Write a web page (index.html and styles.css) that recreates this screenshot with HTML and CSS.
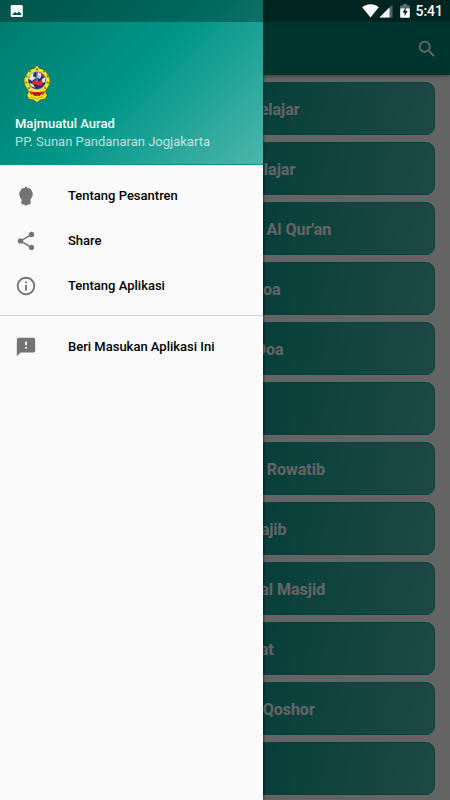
FILE: index.html
```html
<!DOCTYPE html>
<html lang="id">

<head>
    <meta charset="UTF-8">
    <meta name="viewport" content="width=device-width, initial-scale=1.0">
    <title>Majmuatul Aurad</title>
    <link rel="stylesheet" href="styles.css">
</head>

<body>
    <!-- status bar -->
    <div class="status">
        <svg class="status-photo" width="14" height="14" viewBox="0 0 14 14">
            <path fill="#fff" fill-rule="evenodd" d="M2 1h9.500a1.300 1.300 0 0 1 1.300 1.300v9.400a1.300 1.300 0 0 1-1.300 1.300H2a1.300 1.300 0 0 1-1.300-1.300V2.300A1.300 1.300 0 0 1 2 1zM2.500 11h8.500v-1.500L8.800 7.400 7.200 9.200 5 8 2.500 10.200z" />
        </svg>
        <svg width="17" height="14" viewBox="0 0 17 14">
            <path fill="#fff" d="M8.500 13.500L.2 3.200C2.500 1.300 5.300.3 8.500.3s6 1 8.300 2.900z" />
        </svg>
        <svg class="status-signal" width="14" height="14" viewBox="0 0 14 14">
            <path fill="#fff" fill-opacity=".3" d="M13.500.5v13H.5z" />
            <path fill="#fff" d="M10.500 3.500v10H.5z" />
        </svg>
        <svg class="status-battery" width="10" height="14" viewBox="0 0 10 14">
            <path fill="#fff" fill-opacity=".35" d="M3 0h4v1.400h2.300q.5 0 .5.600V5H.2V2q0-.6.5-.6H3z" />
            <path fill="#fff" d="M.2 4.500h9.600v8.500q0 .8-.8.800H1q-.8 0-.8-.8z" />
            <path fill="#00211d" d="M5.800 3.300L2.500 8.500h2.100v3.800l3-5.400H5.600z" />
        </svg>
        <span class="clock">5:41</span>
    </div>

    <!-- halaman utama -->
    <header class="appbar">
        <button class="search" type="button" aria-label="Cari">
            <svg width="22" height="22" viewBox="0 0 24 24">
                <path fill="#fff" d="M15.500 14h-.79l-.28-.27A6.470 6.470 0 0 0 16 9.500 6.500 6.500 0 1 0 9.500 16c1.610 0 3.090-.59 4.230-1.570l.27.28v.79l5 4.990L20.490 19l-4.990-5zm-6 0C7.010 14 5 11.990 5 9.500S7.010 5 9.500 5 14 7.010 14 9.500 11.990 14 9.500 14z" />
            </svg>
        </button>
    </header>

    <main class="list">
        <button class="item" type="button">Doa Sebelum Belajar</button>
        <button class="item" type="button">Doa Setelah Belajar</button>
        <button class="item" type="button">Doa Akan Membaca Al Qur'an</button>
        <button class="item" type="button">Pengertian Doa</button>
        <button class="item" type="button">Pembukaan Doa</button>
        <button class="item" type="button">Tahlil</button>
        <button class="item" type="button">Niat Sholat Sunnah Rowatib</button>
        <button class="item" type="button">Niat Sholat Wajib</button>
        <button class="item" type="button">Niat Sholat Tahiyatal Masjid</button>
        <button class="item" type="button">Sholat Jum'at</button>
        <button class="item" type="button">Niat Sholat Jama Qoshor</button>
        <button class="item" type="button">Wirid</button>
    </main>

    <div class="scrim"></div>

    <!-- menu samping -->
    <aside class="drawer">
        <div class="drawer-header">
            <svg class="logo" width="44" height="40" viewBox="0 0 44 40">
                <path fill="#f6e52b" stroke="#4b5a22" stroke-width=".8" d="M22 1l2.600 3.400c2 .3 4 .9 5.400 2.200 1.600 1.400 2 3 3.200 4.600 1.400 2 2 4.300 1.800 6.600-.2 3-1.700 5-3.400 7.400-.8 1.200-1.100 2.400-.8 3.600l1.400 2.300-1.500 3.300c-1.500 1.500-3.200.8-4.900 1.400L22 38.500l-3.800-2.700c-1.700-.6-3.400.1-4.900-1.400l-1.500-3.300 1.400-2.300c.3-1.200 0-2.400-.8-3.600-1.700-2.400-3.200-4.400-3.400-7.400-.2-2.300.4-4.600 1.800-6.600 1.200-1.600 1.600-3.200 3.200-4.600 1.400-1.300 3.400-1.900 5.400-2.200z" />
                <circle cx="22" cy="16.500" r="9" fill="#292d73" stroke="#c9bf55" stroke-width=".6" />
                <path fill="#dce5e9" d="M15 11l4-3-1 4 3 2-4 3-3-2zM23 8l4 2-2 5-3-2zM14 19l4 1 2 4-4-2zM27 15l3-2v5l-3 1z" />
                <path fill="#df2931" d="M17 18l4-2 2 2 3-2 2 3-2 3-4-1-2-1-2 1zM26 9l3 3-1 1-2-2z" />
                <path fill="none" stroke="#8fa3bd" stroke-width="1" d="M22 8v10M19 15l6-3" />
                <path fill="#d02c2c" d="M14 27l5 1h6l5-1-2 4-2-1-1 2h-6l-1-2-2 1z" />
                <path fill="#7c2020" d="M18 29h8v1.500h-8z" />
                <g fill="#3d8b4e">
                    <path d="M22 3.200l1.500 3h-3z" />
                    <circle cx="15" cy="7.500" r="1.100" />
                    <circle cx="29" cy="7.500" r="1.100" />
                    <circle cx="11.500" cy="12.500" r="1.100" />
                    <circle cx="32.500" cy="12.500" r="1.100" />
                    <circle cx="11.200" cy="18.500" r="1.100" />
                    <circle cx="32.800" cy="18.500" r="1.100" />
                    <circle cx="14" cy="24" r="1" />
                    <circle cx="30" cy="24" r="1" />
                </g>
                <path fill="none" stroke="#b39c20" stroke-width=".8" d="M15 33q4 0 7 2 3-2 7-2" />
            </svg>
            <div class="name">Majmuatul Aurad</div>
            <div class="sub">PP. Sunan Pandanaran Jogjakarta</div>
        </div>

        <nav class="menu">
            <a class="menu-item" href="#pesantren">
                <svg width="22" height="22" viewBox="0 0 22 22">
                    <path d="M11 1l1.200 1.700c2 .2 3.500 1 4.200 2.700 1.200 1.400 1.700 3.300 1.200 5.200-.4 1.800-1.500 2.900-2.300 4.300l.3 1.400.4 1.200-1 1.800-2.400.4L11 20.800l-1.600-1.100-2.400-.4-1-1.800.4-1.200.3-1.400c-.8-1.400-1.900-2.500-2.300-4.300-.5-1.900 0-3.800 1.200-5.200.7-1.700 2.200-2.500 4.200-2.700z" />
                </svg>
                Tentang Pesantren
            </a>
            <a class="menu-item" href="#share">
                <svg width="22" height="22" viewBox="0 0 24 24">
                    <path d="M18 16.080c-.76 0-1.440.3-1.960.77L8.910 12.700c.05-.23.09-.46.09-.7s-.04-.47-.09-.7l7.050-4.110c.54.5 1.250.81 2.040.81 1.660 0 3-1.340 3-3s-1.340-3-3-3-3 1.340-3 3c0 .24.04.47.09.7L8.040 9.810C7.500 9.310 6.790 9 6 9c-1.660 0-3 1.340-3 3s1.340 3 3 3c.79 0 1.500-.31 2.040-.81l7.120 4.160c-.05.21-.08.43-.08.65 0 1.610 1.310 2.920 2.920 2.920s2.920-1.310 2.920-2.920-1.310-2.920-2.920-2.920z" />
                </svg>
                Share
            </a>
            <a class="menu-item" href="#aplikasi">
                <svg width="22" height="22" viewBox="0 0 24 24">
                    <path d="M11 17h2v-6h-2v6zm1-15C6.480 2 2 6.480 2 12s4.480 10 10 10 10-4.480 10-10S17.520 2 12 2zm0 18c-4.410 0-8-3.590-8-8s3.590-8 8-8 8 3.590 8 8-3.590 8-8 8zM11 9h2V7h-2v2z" />
                </svg>
                Tentang Aplikasi
            </a>
        </nav>
        <nav class="menu menu-bottom">
            <a class="menu-item" href="#masukan">
                <svg width="22" height="22" viewBox="0 0 24 24">
                    <path d="M20 2H4c-1.100 0-1.990.9-1.990 2L2 22l4-4h14c1.100 0 2-.9 2-2V4c0-1.100-.9-2-2-2zm-7 12h-2v-2h2v2zm0-4h-2V6h2v4z" />
                </svg>
                Beri Masukan Aplikasi Ini
            </a>
        </nav>
    </aside>
</body>

</html>
```

FILE: styles.css
```css
* {
    box-sizing: border-box;
}

body {
    margin: 0;
    position: relative;
    min-height: 100vh;
    background: #fafafa;
    font-family: Roboto, "Liberation Sans", sans-serif;
}

button {
    border: 0;
    padding: 0;
    font-family: inherit;
}

/* status bar */

.status {
    position: absolute;
    top: 0;
    left: 0;
    right: 0;
    z-index: 3;
    height: 22px;
    padding: 0 7px 0 10px;
    display: flex;
    align-items: center;
    background: rgba(0, 0, 0, 0.3);
}

.status-photo {
    margin-right: auto;
}

.status-signal {
    margin-right: 7px;
}

.status-battery {
    margin-right: 5px;
}

.clock {
    color: #fff;
    font-size: 14px;
    font-weight: 500;
}

/* halaman utama */

.appbar {
    height: 75px;
    padding: 22px 12px 0;
    display: flex;
    align-items: center;
    justify-content: flex-end;
    background: #008577;
    box-shadow: 0 1px 4px rgba(0, 0, 0, 0.4);
}

.search {
    height: 22px;
    background: none;
}

.list {
    padding: 7px 15px 5px;
    display: flex;
    flex-direction: column;
    gap: 7px;
}

.item {
    height: 53px;
    padding-top: 2px;
    border: 1px solid #12a897;
    border-radius: 9px;
    background: linear-gradient(100deg, #00796b, #009688 45%, #4db6ac);
    color: #fafafa;
    font-size: 16px;
    font-weight: 700;
}

.scrim {
    position: absolute;
    top: 0;
    right: 0;
    bottom: 0;
    left: 0;
    z-index: 1;
    background: rgba(0, 0, 0, 0.6);
}

/* menu samping */

.drawer {
    position: absolute;
    top: 0;
    bottom: 0;
    left: 0;
    z-index: 2;
    width: 263px;
    background: #fafafa;
    box-shadow: 0 0 3px rgba(0, 0, 0, 0.8);
}

.drawer-header {
    height: 165px;
    padding: 0 15px 13px;
    display: flex;
    flex-direction: column;
    justify-content: flex-end;
    border-bottom: 1px solid #009688;
    background: linear-gradient(135deg, #00796b, #009688, #4db6ac);
    color: #fff;
    font-size: 13px;
    line-height: 18px;
}

.logo {
    margin-bottom: 11px;
}

.name {
    font-weight: 500;
}

.sub {
    opacity: 0.7;
}

.menu {
    padding: 8px 0 7px;
}

.menu-bottom {
    border-top: 1px solid #d5d5d5;
}

.menu-item {
    height: 45px;
    padding: 0 15px;
    display: flex;
    align-items: center;
    gap: 31px;
    color: #000;
    font-size: 13px;
    font-weight: 500;
    text-decoration: none;
}

.menu-item svg {
    fill: #737373;
}
```
